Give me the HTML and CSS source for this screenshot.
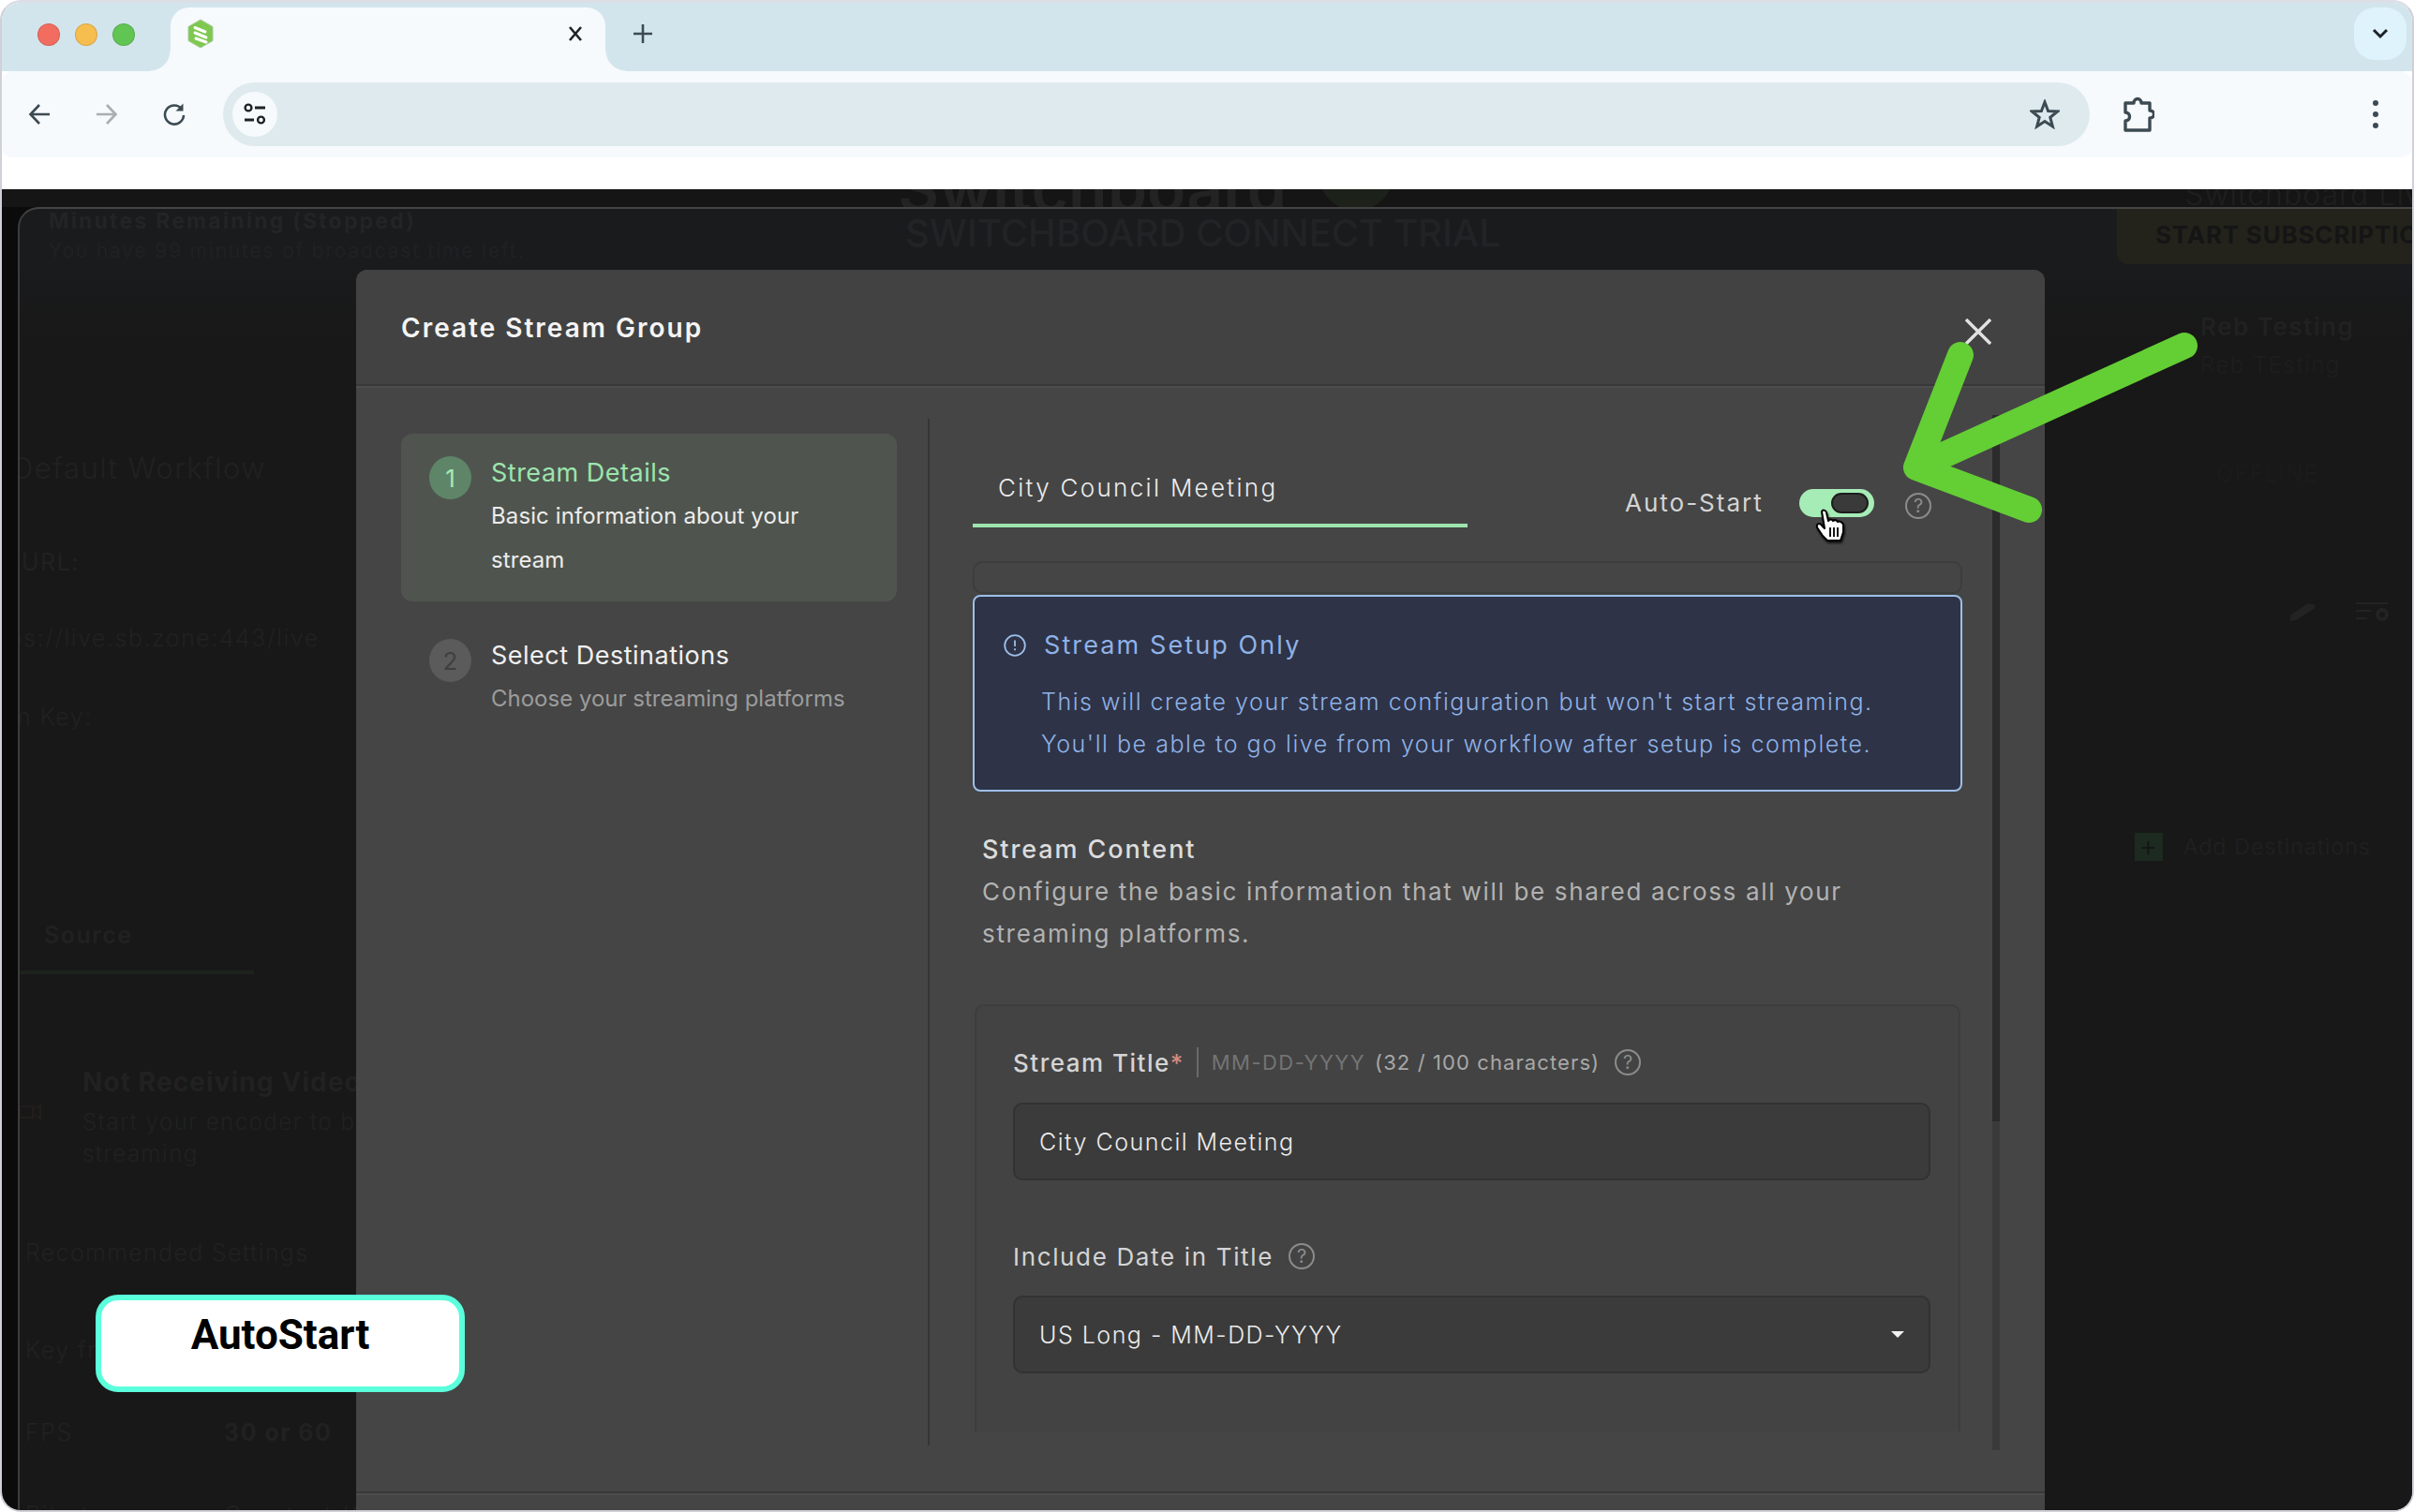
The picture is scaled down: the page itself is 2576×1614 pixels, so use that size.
FILE: index.html
```html
<!DOCTYPE html>
<html lang="en">
<head>
    <meta charset="UTF-8">
    <title>Create Stream Group</title>
    <link rel="stylesheet" href="styles.css">
</head>
<body>
<div class="window">
    <!-- browser chrome -->
    <div class="tabstrip">
        <div class="lights">
            <span class="light red"></span>
            <span class="light yellow"></span>
            <span class="light green"></span>
        </div>
        <div class="tab-page">
            <svg class="favicon" viewBox="0 0 28 32">
                <path d="M14 1 27 8.500V23.500L14 31 1 23.500V8.500Z" fill="#7ec850" stroke="#a9c99a" stroke-width="1" stroke-linejoin="round"/>
                <path d="M8 9.500 19 14M8 15 20 20M9 21 20 25" stroke="#fff" stroke-width="3" stroke-linecap="round" fill="none"/>
            </svg>
            <svg class="tab-close" viewBox="0 0 16 16"><path d="M2 1 14 15M14 1 2 15" stroke="#1d2226" stroke-width="2.600" fill="none"/></svg>
        </div>
        <svg class="tab-new" viewBox="0 0 22 22"><path d="M11 1V21M1 11H21" stroke="#3c4a52" stroke-width="2.600" fill="none"/></svg>
        <div class="tab-list">
            <svg viewBox="0 0 18 12" width="18" height="12"><path d="M2 2 9 9 16 2" stroke="#1d2226" stroke-width="3" fill="none"/></svg>
        </div>
    </div>
    <div class="toolbar">
        <svg class="tool back" viewBox="0 0 24 24"><path d="M23 12H3M12 2 2.500 12 12 22" stroke="#3c4a52" stroke-width="2.600" fill="none"/></svg>
        <svg class="tool forward" viewBox="0 0 24 24"><path d="M1 12H21M12 2 21.500 12 12 22" stroke="#a9aeb1" stroke-width="2.600" fill="none"/></svg>
        <svg class="tool reload" viewBox="0 0 26 26">
            <path d="M21 7.500A10 10 0 1 0 23 14" stroke="#3c4a52" stroke-width="2.600" fill="none"/>
            <path d="M22.500 1.500V9.500H14.500Z" fill="#3c4a52"/>
        </svg>
        <div class="omnibox">
            <div class="site-info">
                <svg viewBox="0 0 24 24" width="24" height="24">
                    <circle cx="5" cy="5" r="3.400" stroke="#1d2226" stroke-width="2.400" fill="none"/>
                    <path d="M12 5H23M1 18H11" stroke="#1d2226" stroke-width="2.800" fill="none"/>
                    <circle cx="18.500" cy="18" r="3.400" stroke="#1d2226" stroke-width="2.400" fill="none"/>
                </svg>
            </div>
            <svg class="star" viewBox="0 0 32 32"><path d="M16 3 19.600 12.500 29.500 13 21.800 19.300 24.400 29 16 23.500 7.600 29 10.200 19.300 2.500 13 12.400 12.500Z" stroke="#3c4a52" stroke-width="3" fill="none"/></svg>
        </div>
        <svg class="puzzle" viewBox="0 0 34 40"><path d="M3 8H12C12 2 20 2 20 8H29V16C35 16 35 24 29 24V37H3V27C9 27 9 18 3 18Z" stroke="#3c4a52" stroke-width="3.400" stroke-linejoin="round" fill="none"/></svg>
        <div class="dots"><span></span><span></span><span></span></div>
    </div>
    <div class="whitebar"></div>

    <div class="stage">
        <!-- dimmed app behind the dialog -->
        <div class="topband">
            <span class="logo-text">Switchboard</span>
            <span class="logo-mark"></span>
            <span class="live-text">Switchboard Live</span>
        </div>
        <div class="gutter-row">
            <div class="panel">
                <div class="col-left">
                    <p class="bg-minutes">Minutes Remaining (Stopped)</p>
                    <p class="bg-left-sub">You have 99 minutes of broadcast time left.</p>
                    <p class="bg-workflow">Default Workflow</p>
                    <p class="bg-url">URL:</p>
                    <p class="bg-url-val">https://live.sb.zone:443/live</p>
                    <p class="bg-key">Stream Key:</p>
                    <p class="bg-source">Source</p>
                    <div class="bg-source-line"></div>
                    <div class="bg-notrec">
                        <svg class="bg-cam" viewBox="0 0 26 22"><path d="M2 6H16V18H2ZM16 10 24 5V19L16 14" stroke="#241c1c" stroke-width="2" fill="none"/></svg>
                        <div>
                            <p class="bg-notrec-title">Not Receiving Video</p>
                            <p class="bg-notrec-text">Start your encoder to begin<br>streaming</p>
                        </div>
                    </div>
                    <p class="bg-rec">Recommended Settings</p>
                    <div class="bg-row first"><span>Key frame</span><span>2 seconds</span></div>
                    <div class="bg-row"><span>FPS</span><span class="bold">30 or 60</span></div>
                    <div class="bg-row"><span>Bitrate</span><span>Constant (CBR)</span></div>
                </div>
                <div class="col-mid">
                    <p class="bg-trial">SWITCHBOARD CONNECT TRIAL</p>
                </div>
                <div class="col-right">
                    <div class="bg-subscribe">START SUBSCRIPTION</div>
                    <p class="bg-reb">Reb Testing</p>
                    <p class="bg-reb-sub">Reb TEsting</p>
                    <p class="bg-offline">OFFLINE</p>
                    <div class="bg-tools">
                        <svg viewBox="0 0 30 20" width="30" height="20"><path d="M1 20 3 13 21 1 29 3 27 7 8 19Z" fill="#232323"/></svg>
                        <svg viewBox="0 0 36 20" width="36" height="20"><path d="M0 1H34M0 9H16M0 17H12" stroke="#232323" stroke-width="2" fill="none"/><circle cx="28" cy="13" r="5" stroke="#232323" stroke-width="4" fill="none"/></svg>
                    </div>
                    <div class="bg-add">
                        <span class="bg-plus">+</span>
                        <span>Add Destinations</span>
                    </div>
                </div>
            </div>
        </div>

        <!-- dialog -->
        <div class="modal">
            <div class="modal-head">
                <h1>Create Stream Group</h1>
                <svg class="modal-close" viewBox="0 0 28 28"><path d="M1 1 27 27M27 1 1 27" stroke="#e2e2e2" stroke-width="3.400" fill="none"/></svg>
            </div>
            <div class="modal-body">
                <div class="side">
                    <div class="step active">
                        <span class="step-num">1</span>
                        <div>
                            <div class="step-title">Stream Details</div>
                            <div class="step-desc">Basic information about your stream</div>
                        </div>
                    </div>
                    <div class="step">
                        <span class="step-num">2</span>
                        <div>
                            <div class="step-title">Select Destinations</div>
                            <div class="step-desc">Choose your streaming platforms</div>
                        </div>
                    </div>
                </div>
                <div class="main">
                    <div class="main-content">
                        <div class="tab-row">
                            <div class="name-tab">City Council Meeting</div>
                            <div class="autostart">
                                <span class="autostart-label">Auto-Start</span>
                                <span class="toggle"><span class="thumb"></span></span>
                                <span class="help">?</span>
                            </div>
                        </div>
                        <div class="scroller">
                            <div class="strip"></div>
                            <div class="info">
                                <div class="info-title">
                                    <svg viewBox="0 0 24 24" width="24" height="24">
                                        <circle cx="12" cy="12" r="10.800" stroke="#9dbfe8" stroke-width="1.800" fill="none"/>
                                        <path d="M12 6.500V13M12 15.200V17.200" stroke="#9dbfe8" stroke-width="1.800" fill="none"/>
                                    </svg>
                                    Stream Setup Only
                                </div>
                                <p>This will create your stream configuration but won't start streaming.<br>You'll be able to go live from your workflow after setup is complete.</p>
                            </div>
                            <div class="section-intro">
                                <h2>Stream Content</h2>
                                <p>Configure the basic information that will be shared across all your streaming platforms.</p>
                            </div>
                            <div class="form-card">
                                <div class="field-label">
                                    <span class="label-main">Stream Title<span class="req">*</span></span>
                                    <span class="label-sep"></span>
                                    <span class="label-fmt">MM-DD-YYYY</span>
                                    <span class="label-count">(32 / 100 characters)</span>
                                    <span class="help">?</span>
                                </div>
                                <div class="input">City Council Meeting</div>
                                <div class="field-label second">
                                    <span class="label-plain">Include Date in Title</span>
                                    <span class="help">?</span>
                                </div>
                                <div class="input select">US Long - MM-DD-YYYY<span class="caret"></span></div>
                            </div>
                        </div>
                    </div>
                    <div class="scrollbar"><div class="scroll-thumb"></div></div>
                </div>
            </div>
            <div class="modal-foot"></div>
        </div>

        <!-- annotations on top of the screenshot -->
        <svg class="hand" viewBox="0 0 34 38">
            <path d="M8 4C9 2 12 2 13 5L15 14C17 12 19 12 20 14C22 12.500 24 13 25 15C27 14 30 15 31 18V26L28 35H14L9 30 3 21C2 17 6 15 9 20L11 22Z" fill="#fff" stroke="#000" stroke-width="2" stroke-linejoin="round"/>
            <path d="M17 21V31M21 21V31M25 21V31" stroke="#000" stroke-width="1.800" fill="none"/>
        </svg>
        <svg class="arrow" viewBox="0 0 340 200">
            <path d="M82 14 35 134 M321 4 35 134 155 179" stroke="#64ce35" stroke-width="28" stroke-linecap="round" stroke-linejoin="round" fill="none"/>
        </svg>
        <div class="callout">AutoStart</div>
    </div>
</div>
</body>
</html>
```

FILE: styles.css
```css
html, body {
    margin: 0;
    padding: 0;
    background: #fff;
}

body {
    font-family: Inter, "Noto Sans", sans-serif;
}

p, h1, h2 {
    margin: 0;
    font-weight: inherit;
}

.window {
    box-sizing: border-box;
    width: 2576px;
    height: 1614px;
    display: flex;
    flex-direction: column;
    overflow: hidden;
    border: 2px solid #cfd0d8;
    border-top: 3px solid #dcdee6;
    border-radius: 22px;
    background: #fff;
}

/* browser chrome */
.tabstrip {
    height: 73px;
    flex: none;
    display: flex;
    background: #d3e5ec;
}

.lights {
    display: flex;
    gap: 16px;
    padding: 22px 0 0 38px;
    width: 142px;
    box-sizing: border-box;
}

.light {
    width: 24px;
    height: 24px;
    border-radius: 50%;
    box-sizing: border-box;
    border: 1px solid rgba(0, 0, 0, 0.12);
}

.red { background: #f26d60; }
.yellow { background: #f6bd4f; }
.green { background: #61c554; }

.tab-page {
    position: relative;
    margin-top: 5px;
    width: 464px;
    height: 68px;
    flex: none;
    margin-left: 38px;
    background: #f6fafd;
    border-radius: 20px 20px 0 0;
}

.tab-page::before,
.tab-page::after {
    content: "";
    position: absolute;
    bottom: 0;
    width: 22px;
    height: 22px;
}

.tab-page::before {
    left: -22px;
    background: radial-gradient(circle at 0 0, transparent 21px, #f6fafd 22px);
}

.tab-page::after {
    right: -22px;
    background: radial-gradient(circle at 100% 0, transparent 21px, #f6fafd 22px);
}

.favicon {
    position: absolute;
    left: 18px;
    top: 12px;
    width: 28px;
    height: 32px;
}

.tab-close {
    position: absolute;
    left: 424px;
    top: 20px;
    width: 16px;
    height: 16px;
}

.tab-new {
    width: 22px;
    height: 22px;
    margin: 22px 0 0 29px;
}

.tab-list {
    width: 56px;
    height: 56px;
    margin: 5px 6px 0 auto;
    border-radius: 22px;
    background: #def3fc;
    display: flex;
    align-items: center;
    justify-content: center;
}

.toolbar {
    height: 92px;
    flex: none;
    display: flex;
    align-items: center;
    background: #f6fafd;
    border-radius: 12px;
    margin-top: 0;
    padding-left: 28px;
}

.tool {
    width: 24px;
    height: 24px;
    flex: none;
    margin-right: 48px;
}

.reload {
    width: 26px;
    height: 26px;
    margin-right: 0;
    margin-left: -1px;
}

.omnibox {
    box-sizing: border-box;
    width: 1992px;
    height: 68px;
    margin-left: 39px;
    flex: none;
    display: flex;
    align-items: center;
    justify-content: space-between;
    border-radius: 34px;
    background: #dfeaef;
    padding: 0 32px 0 10px;
}

.site-info {
    width: 48px;
    height: 48px;
    border-radius: 50%;
    background: #f6fafd;
    display: flex;
    align-items: center;
    justify-content: center;
}

.star {
    width: 32px;
    height: 32px;
}

.puzzle {
    width: 34px;
    height: 40px;
    margin-left: 35px;
    flex: none;
}

.dots {
    margin-left: 233px;
    display: flex;
    flex-direction: column;
    gap: 6px;
}

.dots span {
    width: 6px;
    height: 6px;
    background: #3c4a52;
    border-radius: 50%;
}

.whitebar {
    height: 34px;
    flex: none;
    background: #fff;
}

.stage {
    position: relative;
    flex: 1;
    min-height: 0;
    display: flex;
    flex-direction: column;
    overflow: hidden;
    background: #0b0b0b;
}

/* dimmed app */
.topband {
    height: 19px;
    flex: none;
    display: flex;
    align-items: flex-end;
    overflow: hidden;
    background: #151515;
    padding-left: 956px;
}

.logo-text {
    font-size: 68px;
    line-height: 68px;
    font-weight: 600;
    color: #232323;
    margin-bottom: -14px;
    flex: none;
}

.logo-mark {
    width: 80px;
    height: 80px;
    border-radius: 50%;
    flex: none;
    background: #1c2119;
    margin: 0 0 -4px 34px;
}

.live-text {
    margin-left: 844px;
    font-size: 32px;
    line-height: 36px;
    font-weight: 300;
    letter-spacing: 1px;
    color: #1f1f1f;
    white-space: nowrap;
    flex: none;
    margin-bottom: -5px;
}

.gutter-row {
    flex: 1;
    min-height: 0;
    padding-left: 17px;
    display: flex;
}

.panel {
    flex: 1;
    min-width: 0;
    display: flex;
    overflow: hidden;
    border-top: 2px solid #444;
    border-left: 2px solid #3c3c3c;
    border-radius: 22px 0 0 0;
    background: linear-gradient(#1a1b1d 0, #1a1b1d 60px, #181818 140px);
    color: #212121;
    letter-spacing: 1.500px;
}

.col-left {
    width: 359px;
    flex: none;
    white-space: nowrap;
}

.bg-minutes {
    font-size: 23px;
    line-height: 26px;
    font-weight: 700;
    letter-spacing: 2.200px;
    color: #232425;
    margin-left: 31px;
}

.bg-left-sub {
    font-size: 21px;
    line-height: 30px;
    letter-spacing: 1.800px;
    margin: 4px 0 0 31px;
    color: #202122;
}

.bg-workflow {
    font-size: 31px;
    line-height: 40px;
    margin: 197px 0 0 -8px;
    font-weight: 300;
}

.bg-url {
    font-size: 25px;
    line-height: 32px;
    margin: 64px 0 0 2px;
}

.bg-url-val {
    font-size: 25px;
    line-height: 32px;
    margin: 49px 0 0 -46px;
    font-weight: 300;
}

.bg-key {
    font-size: 25px;
    line-height: 32px;
    margin: 52px 0 0 -78px;
    font-weight: 300;
}

.bg-source {
    font-size: 25px;
    line-height: 32px;
    margin: 201px 0 0 26px;
    font-weight: 600;
}

.bg-source-line {
    width: 250px;
    height: 4px;
    margin-top: 22px;
    background: #1d221d;
}

.bg-notrec {
    display: flex;
    margin-top: 97px;
}

.bg-cam {
    width: 26px;
    height: 22px;
    margin: 38px 43px 0 -2px;
    flex: none;
}

.bg-notrec-title {
    font-size: 28px;
    line-height: 36px;
    font-weight: 700;
    letter-spacing: 1.100px;
}

.bg-notrec-text {
    font-size: 24px;
    line-height: 34px;
    margin-top: 8px;
    font-weight: 300;
}

.bg-rec {
    font-size: 25px;
    line-height: 32px;
    margin: 72px 0 0 6px;
    font-weight: 300;
    letter-spacing: 1.300px;
}

.bg-row {
    display: flex;
    margin: 56px 0 0 6px;
    font-size: 25px;
    line-height: 32px;
    font-weight: 300;
}

.bg-row.first {
    margin-top: 72px;
}

.bg-row span:first-child {
    width: 212px;
    flex: none;
}

.bold {
    font-weight: 700;
}

.col-mid {
    margin-left: 586px;
    width: 1000px;
    flex: none;
}

.bg-trial {
    font-size: 40px;
    line-height: 48px;
    margin-top: 2px;
    font-weight: 500;
    letter-spacing: 0;
    color: #222325;
    white-space: nowrap;
}

.col-right {
    width: 320px;
    flex: none;
    margin-left: 293px;
    white-space: nowrap;
}

.bg-subscribe {
    height: 59px;
    box-sizing: border-box;
    padding-left: 41px;
    line-height: 56px;
    font-size: 26px;
    font-weight: 700;
    letter-spacing: 0.800px;
    color: #151515;
    background: #23231c;
    border-radius: 0 0 0 12px;
}

.bg-reb {
    margin: 50px 0 0 89px;
    font-size: 26px;
    line-height: 34px;
    font-weight: 600;
}

.bg-reb-sub {
    margin: 7px 0 0 89px;
    font-size: 24px;
    line-height: 34px;
    font-weight: 300;
    color: #1e1e1e;
}

.bg-offline {
    margin: 82px 0 0 106px;
    font-size: 24px;
    line-height: 34px;
    color: #1b1b1b;
}

.bg-tools {
    display: flex;
    gap: 42px;
    margin: 120px 0 0 183px;
    align-items: center;
}

.bg-add {
    display: flex;
    align-items: center;
    gap: 22px;
    margin: 226px 0 0 19px;
    font-size: 23px;
    font-weight: 300;
    letter-spacing: 1.200px;
}

.bg-plus {
    width: 30px;
    height: 30px;
    text-align: center;
    line-height: 28px;
    background: #1c2a20;
    color: #141414;
    font-size: 30px;
    flex: none;
}

/* dialog */
.modal {
    position: absolute;
    left: 378px;
    top: 86px;
    width: 1802px;
    bottom: 0;
    display: flex;
    flex-direction: column;
    background: #454545;
    border-radius: 12px 12px 0 0;
    color: #ddd;
}

.modal-head {
    height: 124px;
    flex: none;
    box-sizing: border-box;
    display: flex;
    align-items: center;
    justify-content: space-between;
    padding: 0 57px 0 48px;
    background: #424242;
    border-radius: 12px 12px 0 0;
    border-bottom: 2px solid #383838;
    box-shadow: 0 2px 0 #4d4d4d;
}

.modal-head h1 {
    font-size: 28px;
    line-height: 40px;
    font-weight: 600;
    letter-spacing: 2px;
    color: #f4f4f4;
    margin-top: 2px;
}

.modal-close {
    width: 28px;
    height: 28px;
    margin-top: 10px;
}

.modal-body {
    flex: 1;
    min-height: 0;
    display: flex;
    padding: 35px 0 49px;
}

.side {
    width: 612px;
    flex: none;
    box-sizing: border-box;
    padding: 16px 33px 0 48px;
    border-right: 2px solid #353535;
}

.step {
    display: flex;
    gap: 21px;
    padding: 24px 30px 21px;
    border-radius: 12px;
    margin-bottom: 16px;
}

.step.active {
    background: #4f554e;
}

.step-num {
    width: 45px;
    height: 46px;
    border-radius: 50%;
    flex: none;
    display: flex;
    align-items: center;
    justify-content: center;
    background: #5b5b5b;
    color: #3f3f3f;
    font-size: 26px;
}

.active .step-num {
    background: #5f8569;
    color: #a4eab6;
}

.step-title {
    font-size: 27px;
    line-height: 36px;
    letter-spacing: 0.500px;
    color: #f0f0f0;
}

.active .step-title {
    color: #9ce5ae;
}

.step-desc {
    font-size: 24px;
    line-height: 47px;
    margin-top: 4px;
    color: #9c9c9c;
}

.active .step-desc {
    color: #ececec;
    letter-spacing: 0.100px;
}

.main {
    flex: 1;
    min-width: 0;
    display: flex;
    padding-left: 46px;
}

.main-content {
    width: 1088px;
    flex: none;
}

.tab-row {
    display: flex;
    align-items: flex-end;
    height: 116px;
}

.name-tab {
    box-sizing: border-box;
    width: 528px;
    height: 64px;
    padding-left: 27px;
    font-size: 26px;
    line-height: 44px;
    font-weight: 300;
    letter-spacing: 2.300px;
    color: #ececec;
    border-bottom: 4px solid #9ce5ae;
}

.autostart {
    display: flex;
    align-items: center;
    margin: 0 0 7px 168px;
    height: 40px;
}

.autostart-label {
    width: 186px;
    flex: none;
    font-size: 26px;
    letter-spacing: 2px;
    color: #d4d4d4;
}

.toggle {
    width: 80px;
    height: 30px;
    flex: none;
    box-sizing: border-box;
    padding: 4px 6px 0 34px;
    border-radius: 15px;
    background: #a6ecb7;
    margin-top: 2px;
}

.thumb {
    display: block;
    height: 22px;
    box-sizing: border-box;
    border: 2px solid #1d1d1d;
    border-radius: 11px;
    background: #3a3a3a;
}

.autostart .help {
    margin: 8px 0 0 33px;
}

.help {
    width: 28px;
    height: 28px;
    box-sizing: border-box;
    flex: none;
    display: inline-flex;
    align-items: center;
    justify-content: center;
    border: 2px solid #8c8c8c;
    border-radius: 50%;
    font-size: 20px;
    color: #8c8c8c;
}

.scroller {
    width: 1056px;
    height: 929px;
    margin-top: 36px;
    overflow: hidden;
}

.strip {
    height: 35px;
    box-sizing: border-box;
    border: 2px solid #3d3d3d;
    border-radius: 10px;
}

.info {
    box-sizing: border-box;
    height: 210px;
    margin-top: 1px;
    padding: 34px 30px 0 31px;
    border: 2px solid #9dbfe8;
    border-radius: 8px;
    background: #2e3347;
    color: #8fb2e6;
}

.info-title {
    display: flex;
    align-items: center;
    gap: 19px;
    font-size: 27px;
    line-height: 36px;
    letter-spacing: 2.100px;
}

.info p {
    margin: 20px 0 0 40px;
    font-size: 25px;
    line-height: 45px;
    font-weight: 300;
    letter-spacing: 1.530px;
    white-space: nowrap;
}

.section-intro {
    margin: 44px 0 0 10px;
}

.section-intro h2 {
    font-size: 27px;
    line-height: 36px;
    font-weight: 500;
    letter-spacing: 1.900px;
    color: #dcdcdc;
}

.section-intro p {
    margin-top: 4px;
    font-size: 26px;
    line-height: 45px;
    letter-spacing: 1.680px;
    color: #b2b2b2;
}

.form-card {
    margin: 53px 2px 0 2px;
    box-sizing: border-box;
    padding: 40px 30px 0 39px;
    height: 600px;
    border: 2px solid #3d3d3d;
    border-radius: 10px;
    background: #434343;
}

.field-label {
    display: flex;
    align-items: center;
    height: 40px;
    white-space: nowrap;
}

.field-label.second {
    margin-top: 61px;
}

.label-main {
    font-size: 26px;
    font-weight: 500;
    letter-spacing: 1.500px;
    color: #d4d4d4;
    flex: none;
}

.label-plain {
    font-size: 26px;
    letter-spacing: 1.650px;
    color: #d4d4d4;
    margin-right: 16px;
    flex: none;
}

.req {
    color: #d48a80;
}

.label-sep {
    width: 2px;
    height: 32px;
    background: #6a6a6a;
    margin: 0 14px 0 13px;
}

.label-fmt {
    font-size: 22px;
    letter-spacing: 1.450px;
    color: #747474;
    margin-right: 10px;
}

.label-count {
    font-size: 22px;
    letter-spacing: 1.100px;
    color: #a8a8a8;
    margin-right: 16px;
}

.input {
    box-sizing: border-box;
    height: 83px;
    margin-top: 23px;
    padding: 0 25px 0 26px;
    display: flex;
    align-items: center;
    justify-content: space-between;
    background: #3b3b3b;
    border: 2px solid #323232;
    border-radius: 10px;
    font-size: 25px;
    font-weight: 300;
    letter-spacing: 1.500px;
    color: #ececec;
}

.select {
    margin-top: 22px;
}

.caret {
    width: 0;
    height: 0;
    border-left: 7px solid transparent;
    border-right: 7px solid transparent;
    border-top: 7px solid #f2f2f2;
    margin-right: 1px;
}

.scrollbar {
    width: 8px;
    height: 1105px;
    flex: none;
    margin-top: -4px;
    background: #3a3a3a;
}

.scroll-thumb {
    height: 754px;
    background: #2b2b2b;
}

.modal-foot {
    height: 18px;
    flex: none;
    border-top: 2px solid #383838;
    box-shadow: inset 0 2px 0 #4d4d4d;
}

/* annotations */
.hand {
    position: absolute;
    left: 1934px;
    top: 340px;
    width: 34px;
    height: 38px;
    filter: drop-shadow(1px 2px 1px rgba(0, 0, 0, 0.7));
}

.arrow {
    position: absolute;
    left: 2008px;
    top: 163px;
    width: 340px;
    height: 200px;
    overflow: visible;
}

.callout {
    position: absolute;
    left: 100px;
    top: 1180px;
    width: 394px;
    height: 104px;
    box-sizing: border-box;
    padding-bottom: 18px;
    display: flex;
    align-items: center;
    justify-content: center;
    border: 6px solid #5affdc;
    border-radius: 24px;
    background: #fff;
    color: #000;
    font-family: Roboto, "Liberation Sans", sans-serif;
    font-size: 44px;
    font-weight: 700;
}
```
